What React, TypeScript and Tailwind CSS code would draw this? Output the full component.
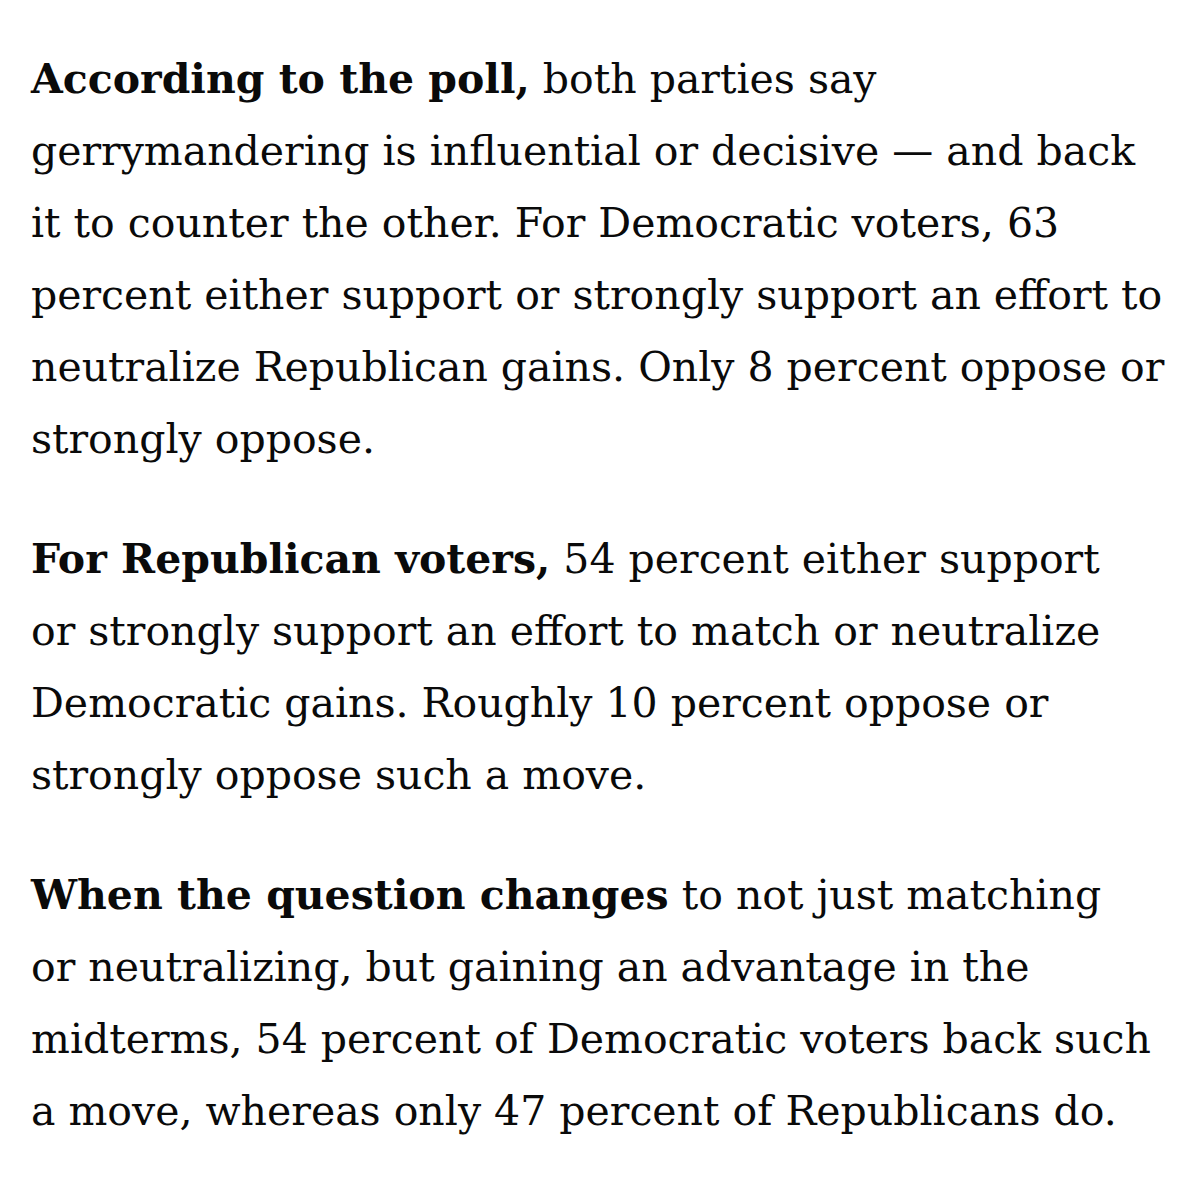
export default function App() {
  return (
    <div className="min-h-screen w-full bg-white">
      <article className="px-[31px] pt-[43px] font-['DejaVu_Serif',serif] text-[41px] leading-[72px] text-[#0a0a0a]">
        <p className="mb-[48px] whitespace-nowrap">
          <strong className="font-bold">According to the poll,</strong> both parties say
          <br />
          gerrymandering is influential or decisive — and back
          <br />
          it to counter the other. For Democratic voters, 63
          <br />
          percent either support or strongly support an effort to
          <br />
          neutralize Republican gains. Only 8 percent oppose or
          <br />
          strongly oppose.
        </p>
        <p className="mb-[48px] whitespace-nowrap">
          <strong className="font-bold">For Republican voters,</strong> 54 percent either support
          <br />
          or strongly support an effort to match or neutralize
          <br />
          Democratic gains. Roughly 10 percent oppose or
          <br />
          strongly oppose such a move.
        </p>
        <p className="whitespace-nowrap">
          <strong className="font-bold">When the question changes</strong> to not just matching
          <br />
          or neutralizing, but gaining an advantage in the
          <br />
          midterms, 54 percent of Democratic voters back such
          <br />
          a move, whereas only 47 percent of Republicans do.
        </p>
      </article>
    </div>
  );
}
